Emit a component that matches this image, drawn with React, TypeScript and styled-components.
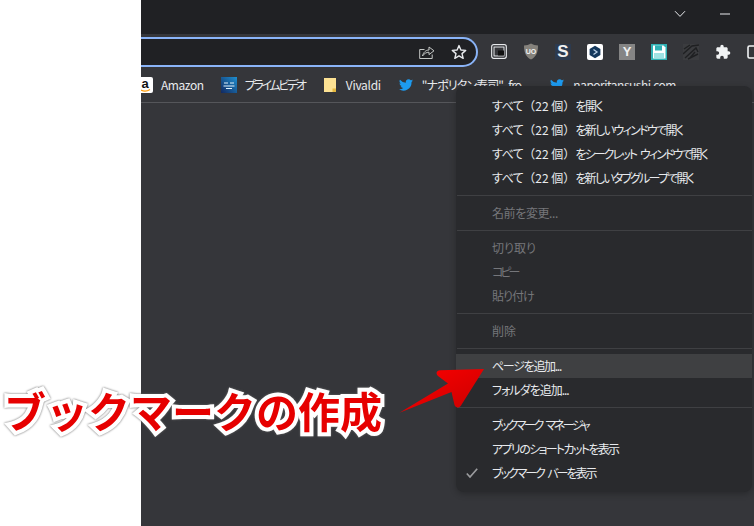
import React from 'react'
import styled, { createGlobalStyle } from 'styled-components'
import { MdExtension } from 'react-icons/md'

const GlobalStyle = createGlobalStyle`
  html, body {
    margin: 0;
    padding: 0;
    background: #fff;
  }
  body {
    font-family: "Noto Sans CJK JP", "Liberation Sans", sans-serif;
    font-feature-settings: "palt";
  }
`

const Page = styled.div`
  position: relative;
  display: flex;
  width: 754px;
  height: 526px;
  overflow: hidden;
`

const BlankSide = styled.div`
  flex: 0 0 141px;
  background: #fff;
`

const Browser = styled.div`
  flex: 1;
  min-width: 0;
  display: flex;
  flex-direction: column;
  overflow: hidden;
  background: #35363a;
`

const TitleBar = styled.div`
  flex: 0 0 34px;
  display: flex;
  align-items: center;
  justify-content: flex-end;
  gap: 34px;
  padding: 0 24px 6px 0;
  box-sizing: border-box;
  background: #202124;
  color: #e8eaed;
`

const Toolbar = styled.div`
  flex: 0 0 35px;
  display: flex;
  align-items: center;
  gap: 13px;
`

const Omnibox = styled.div`
  flex: 0 0 337px;
  height: 30px;
  box-sizing: border-box;
  display: flex;
  align-items: center;
  justify-content: flex-end;
  gap: 16px;
  padding-right: 9px;
  background: #202124;
  border: 2px solid #8ab4f8;
  border-left: 0;
  border-radius: 0 15px 15px 0;
  color: #c4c7c5;
`

const ExtensionRow = styled.div`
  display: flex;
  align-items: center;
  gap: 16px;
  flex: none;
`

const ExtSlot = styled.div`
  width: 16px;
  height: 16px;
  flex: none;
  display: flex;
  align-items: center;
  justify-content: center;
`

const LetterIcon = styled.div<{ $bg: string; $size: number }>`
  width: 16px;
  height: 16px;
  display: flex;
  align-items: center;
  justify-content: center;
  background: ${(p) => p.$bg};
  color: #f1f1f1;
  font: bold ${(p) => p.$size}px "Liberation Sans", sans-serif;
`

const BookmarksBar = styled.div`
  flex: 0 0 34px;
  box-sizing: border-box;
  display: flex;
  align-items: center;
  margin-left: -4px;
  padding-bottom: 2px;
  white-space: nowrap;
  border-bottom: 1px solid #55565a;
`

const Bookmark = styled.div<{ $gap: number; $after: number }>`
  display: flex;
  align-items: center;
  gap: ${(p) => p.$gap}px;
  margin-right: ${(p) => p.$after}px;
  flex: none;
  color: #e8eaed;
  font-size: 12px;
  line-height: 16px;
`

const BookmarkLabel = styled.span<{ $tight: number }>`
  letter-spacing: ${(p) => p.$tight}px;
`

const Menu = styled.div`
  position: absolute;
  left: 456px;
  top: 86px;
  width: 296px;
  box-sizing: border-box;
  padding: 8px 0 7px;
  background: #292a2d;
  border-radius: 8px;
  box-shadow: 0 2px 6px rgba(0, 0, 0, 0.25);
`

const MenuRow = styled.div<{ $disabled?: boolean; $active?: boolean }>`
  position: relative;
  height: 24px;
  box-sizing: border-box;
  padding: 0 0 2px 36px;
  display: flex;
  align-items: center;
  font-size: 12px;
  white-space: nowrap;
  color: ${(p) => (p.$disabled ? '#75767a' : '#e8eaed')};
  background: ${(p) => (p.$active ? '#3f4042' : 'transparent')};
`

const MenuLabel = styled.span<{ $tight: number }>`
  letter-spacing: ${(p) => p.$tight}px;
  word-spacing: 3px;
  white-space: pre;
`

const AllHead = styled.span`
  letter-spacing: -0.5px;
`

const Count = styled.span`
  letter-spacing: 0;
  word-spacing: 0;
  font-feature-settings: normal;
`

const MenuSeparator = styled.div`
  height: 1px;
  margin: 5px 0 5px 1px;
  background: #3f4043;
`

const CheckMark = styled.svg`
  position: absolute;
  left: 10px;
  top: 6px;
`

const Caption = styled.div`
  position: absolute;
  left: 4px;
  top: 382px;
  font-family: "Noto Sans CJK JP", sans-serif;
  font-feature-settings: normal;
  font-size: 42px;
  font-weight: 700;
  line-height: 56px;
  white-space: nowrap;
  color: #e60000;
  -webkit-text-stroke: 8px #fff;
  paint-order: stroke fill;
  filter: drop-shadow(0 0 1px #666);
`

const ArrowSvg = styled.svg`
  position: absolute;
  left: 395px;
  top: 362px;
`

const Chevron = () => (
  <svg width="12" height="8" viewBox="0 0 12 8">
    <path d="M1 1.2 6 6.4 11 1.2" fill="none" stroke="currentColor" />
  </svg>
)

const Minimize = () => (
  <svg width="10" height="2" viewBox="0 0 10 2">
    <path d="M0 1H10" stroke="currentColor" />
  </svg>
)

const ShareIcon = () => (
  <svg width="16" height="16" viewBox="0 0 16 16" fill="none" stroke="currentColor" strokeWidth="1">
    <path d="M.7 5.5V14.5H13.2V10.5" />
    <path d="M.7 5.5H5.5" />
    <path d="M3.5 12C4.2 8.5 6.8 6 10 6V3L15 6.8 10 10.6V8.2C7.5 8.2 5 9.6 3.5 12Z" />
  </svg>
)

const StarIcon = () => (
  <svg width="16" height="16" viewBox="0 0 16 16" fill="none" stroke="#e8eaed" strokeWidth="1.4">
    <path d="M8 1.6 9.9 6 14.7 6.4 11 9.6 12.2 14.3 8 11.8 3.8 14.3 5 9.6 1.3 6.4 6.1 6Z" strokeLinejoin="round" />
  </svg>
)

const PipIcon = () => (
  <svg width="16" height="15" viewBox="0 0 16 15">
    <rect x=".7" y=".7" width="14.6" height="13.6" rx="2" fill="#202124" stroke="#e8eaed" strokeWidth="1.2" />
    <rect x="2.5" y="2.5" width="11" height="10" fill="#e8eaed" />
    <rect x="3.5" y="3.5" width="9" height="8" fill="#35363a" />
    <rect x="7" y="6.5" width="6" height="5" fill="#111" />
  </svg>
)

const ShieldIcon = () => (
  <svg width="16" height="17" viewBox="0 0 16 17">
    <path d="M8 .5C10 1.8 12.5 2.3 15 2.4 15 9 13.5 13.5 8 16.5 2.5 13.5 1 9 1 2.4 3.5 2.3 6 1.8 8 .5Z" fill="#85827c" />
    <text x="8" y="10.5" textAnchor="middle" fontFamily="Liberation Sans" fontWeight="700" fontSize="7" fill="#f2f2f2">UO</text>
  </svg>
)

const HexIcon = () => (
  <svg width="16" height="16" viewBox="0 0 16 16">
    <rect width="16" height="16" rx="2" fill="#fff" />
    <path d="M8 1.8 13.4 4.9V11L8 14.2 2.6 11V4.9Z" fill="#14385c" />
    <path d="M6.5 5.5 10 8 6.5 10.5" fill="none" stroke="#b9cfe4" strokeWidth="1.3" />
  </svg>
)

const FloppyIcon = () => (
  <svg width="16" height="16" viewBox="0 0 16 16">
    <rect width="16" height="16" fill="#2fb1b4" />
    <path d="M2 1.5H12.5L14.5 3.5V14.5H2Z" fill="#fff" />
    <rect x="4" y="1.5" width="7" height="5" fill="#2fb1b4" />
    <rect x="3" y="9" width="10" height="5.5" fill="#9fe3e4" />
  </svg>
)

const ScribbleIcon = () => (
  <svg width="16" height="16" viewBox="0 0 16 16">
    <rect width="16" height="16" fill="#3b3c3f" />
    <path d="M0 10 9 2 16 1M2 14 13 4 15 8M5 15 15 10M1 5 7 1M7 14 12 8" fill="none" stroke="#1f2022" strokeWidth="1.4" />
  </svg>
)

const SideIcon = () => (
  <svg width="16" height="16" viewBox="0 0 16 16">
    <rect x="1" y="2" width="14" height="12" rx="1.5" fill="none" stroke="#f1f3f4" strokeWidth="1.6" />
  </svg>
)

const AmazonIcon = () => (
  <svg width="16" height="16" viewBox="0 0 16 16">
    <rect width="16" height="16" rx="2" fill="#fff" />
    <text x="8" y="11" textAnchor="middle" fontFamily="Liberation Sans" fontWeight="700" fontSize="13" fill="#111">a</text>
    <path d="M3 12.5C6 14.5 10 14.5 13 12.5" fill="none" stroke="#f90" strokeWidth="1.2" />
  </svg>
)

const PrimeIcon = () => (
  <svg width="16" height="16" viewBox="0 0 16 16">
    <defs>
      <linearGradient id="prime" x1="0" y1="1" x2="1" y2="0">
        <stop offset="0" stopColor="#12285f" />
        <stop offset="1" stopColor="#1f8fd0" />
      </linearGradient>
    </defs>
    <rect width="16" height="16" fill="url(#prime)" />
    <path d="M3 6H7M9 6H13M2.5 9H13.5M5 11.5H11" stroke="#dff1fb" strokeWidth="1" />
  </svg>
)

const FolderIcon = () => (
  <svg width="12" height="14" viewBox="0 0 12 14">
    <rect width="12" height="14" fill="#fde293" />
    <path d="M8.5 14V10.5H12V14Z" fill="#e6b93f" />
  </svg>
)

const TwitterIcon = () => (
  <svg width="14" height="12" viewBox="0 0 24 20">
    <path
      fill="#1d9bf0"
      d="M24 2.4a9.8 9.8 0 0 1-2.8.8A4.9 4.9 0 0 0 23.3.5a9.8 9.8 0 0 1-3.1 1.2 4.9 4.9 0 0 0-8.4 4.5A14 14 0 0 1 1.7.9a4.9 4.9 0 0 0 1.5 6.6 4.9 4.9 0 0 1-2.2-.6c0 2.3 1.6 4.4 3.9 4.9a4.9 4.9 0 0 1-2.2.1 4.9 4.9 0 0 0 4.6 3.4A9.9 9.9 0 0 1 0 17.3 14 14 0 0 0 21.5 4.9c1-.7 1.8-1.5 2.5-2.5Z"
    />
  </svg>
)

const extensions = [
  <PipIcon />,
  <ShieldIcon />,
  <LetterIcon $bg="#2c3a4e" $size={17}>S</LetterIcon>,
  <HexIcon />,
  <LetterIcon $bg="#858585" $size={13}>Y</LetterIcon>,
  <FloppyIcon />,
  <ScribbleIcon />,
  <MdExtension size={18} color="#f1f3f4" />,
  <SideIcon />,
]

const bookmarks = [
  { icon: <AmazonIcon />, label: 'Amazon', tight: -0.45, gap: 8, after: 17 },
  { icon: <PrimeIcon />, label: 'プライムビデオ', tight: -2.3, gap: 8, after: 19 },
  { icon: <FolderIcon />, label: 'Vivaldi', tight: -0.3, gap: 10, after: 18 },
  { icon: <TwitterIcon />, label: '"ナポリタン寿司" -fro...', tight: -0.9, gap: 9, after: 22 },
  { icon: <TwitterIcon />, label: 'naporitansushi.com', tight: -0.5, gap: 9, after: 0 },
]

const HEAD = 'すべて'
const COUNT = '（22 個）'

const menuGroups: { label: string; tight: number; disabled?: boolean; active?: boolean; checked?: boolean }[][] = [
  [
    { label: `${HEAD}${COUNT}を開く`, tight: -1.5 },
    { label: `${HEAD}${COUNT}を新しいウィンドウで開く`, tight: -1.65 },
    { label: `${HEAD}${COUNT}をシークレット ウィンドウで開く`, tight: -1.9 },
    { label: `${HEAD}${COUNT}を新しいタブグループで開く`, tight: -1.8 },
  ],
  [{ label: '名前を変更...', tight: -0.4, disabled: true }],
  [
    { label: '切り取り', tight: 0, disabled: true },
    { label: 'コピー', tight: -3, disabled: true },
    { label: '貼り付け', tight: -1, disabled: true },
  ],
  [{ label: '削除', tight: 0, disabled: true }],
  [
    { label: 'ページを追加...', tight: -1.3, active: true },
    { label: 'フォルダを追加...', tight: -1 },
  ],
  [
    { label: 'ブックマーク マネージャ', tight: -2.35 },
    { label: 'アプリのショートカットを表示', tight: -1.65 },
    { label: 'ブックマーク バーを表示', tight: -2.05, checked: true },
  ],
]

// the count in brackets keeps full-width parens, the rest of the label is squeezed
const renderLabel = (label: string) => {
  if (!label.includes(COUNT)) return label
  const tail = label.split(COUNT)[1]
  return (
    <>
      <AllHead>{HEAD}</AllHead>
      <Count>{COUNT}</Count>
      {tail}
    </>
  )
}

export default function App() {
  return (
    <Page>
      <GlobalStyle />
      <BlankSide />
      <Browser>
        <TitleBar>
          <Chevron />
          <Minimize />
        </TitleBar>
        <Toolbar>
          <Omnibox>
            <ShareIcon />
            <StarIcon />
          </Omnibox>
          <ExtensionRow>
            {extensions.map((icon, i) => (
              <ExtSlot key={i}>{icon}</ExtSlot>
            ))}
          </ExtensionRow>
        </Toolbar>
        <BookmarksBar>
          {bookmarks.map((b) => (
            <Bookmark key={b.label} $gap={b.gap} $after={b.after}>
              {b.icon}
              <BookmarkLabel $tight={b.tight}>{b.label}</BookmarkLabel>
            </Bookmark>
          ))}
        </BookmarksBar>
      </Browser>

      <Menu>
        {menuGroups.map((group, g) => (
          <React.Fragment key={g}>
            {g > 0 && <MenuSeparator />}
            {group.map((item) => (
              <MenuRow key={item.label} $disabled={item.disabled} $active={item.active}>
                {item.checked && (
                  <CheckMark width="12" height="12" viewBox="0 0 12 12">
                    <path d="M.8 6.5 4 10 11.2 1.8" fill="none" stroke="#9a9b9d" strokeWidth="1.7" />
                  </CheckMark>
                )}
                <MenuLabel $tight={item.tight}>{renderLabel(item.label)}</MenuLabel>
              </MenuRow>
            ))}
          </React.Fragment>
        ))}
      </Menu>

      <Caption>ブックマークの作成</Caption>
      <ArrowSvg width="95" height="56" viewBox="395 362 95 56">
        <defs>
          <linearGradient id="arrow" x1="0" y1="0" x2="1" y2="1">
            <stop offset="0" stopColor="#ff0000" />
            <stop offset="1" stopColor="#c80000" />
          </linearGradient>
        </defs>
        <path
          d="M399.5 412.8 448 383.5 438 376C435.5 373.5 436.5 370.5 440 370.3L484 369 461 405.5C459 408.5 455.5 408 454.5 405L451.5 392Z"
          fill="url(#arrow)"
        />
      </ArrowSvg>
    </Page>
  )
}
